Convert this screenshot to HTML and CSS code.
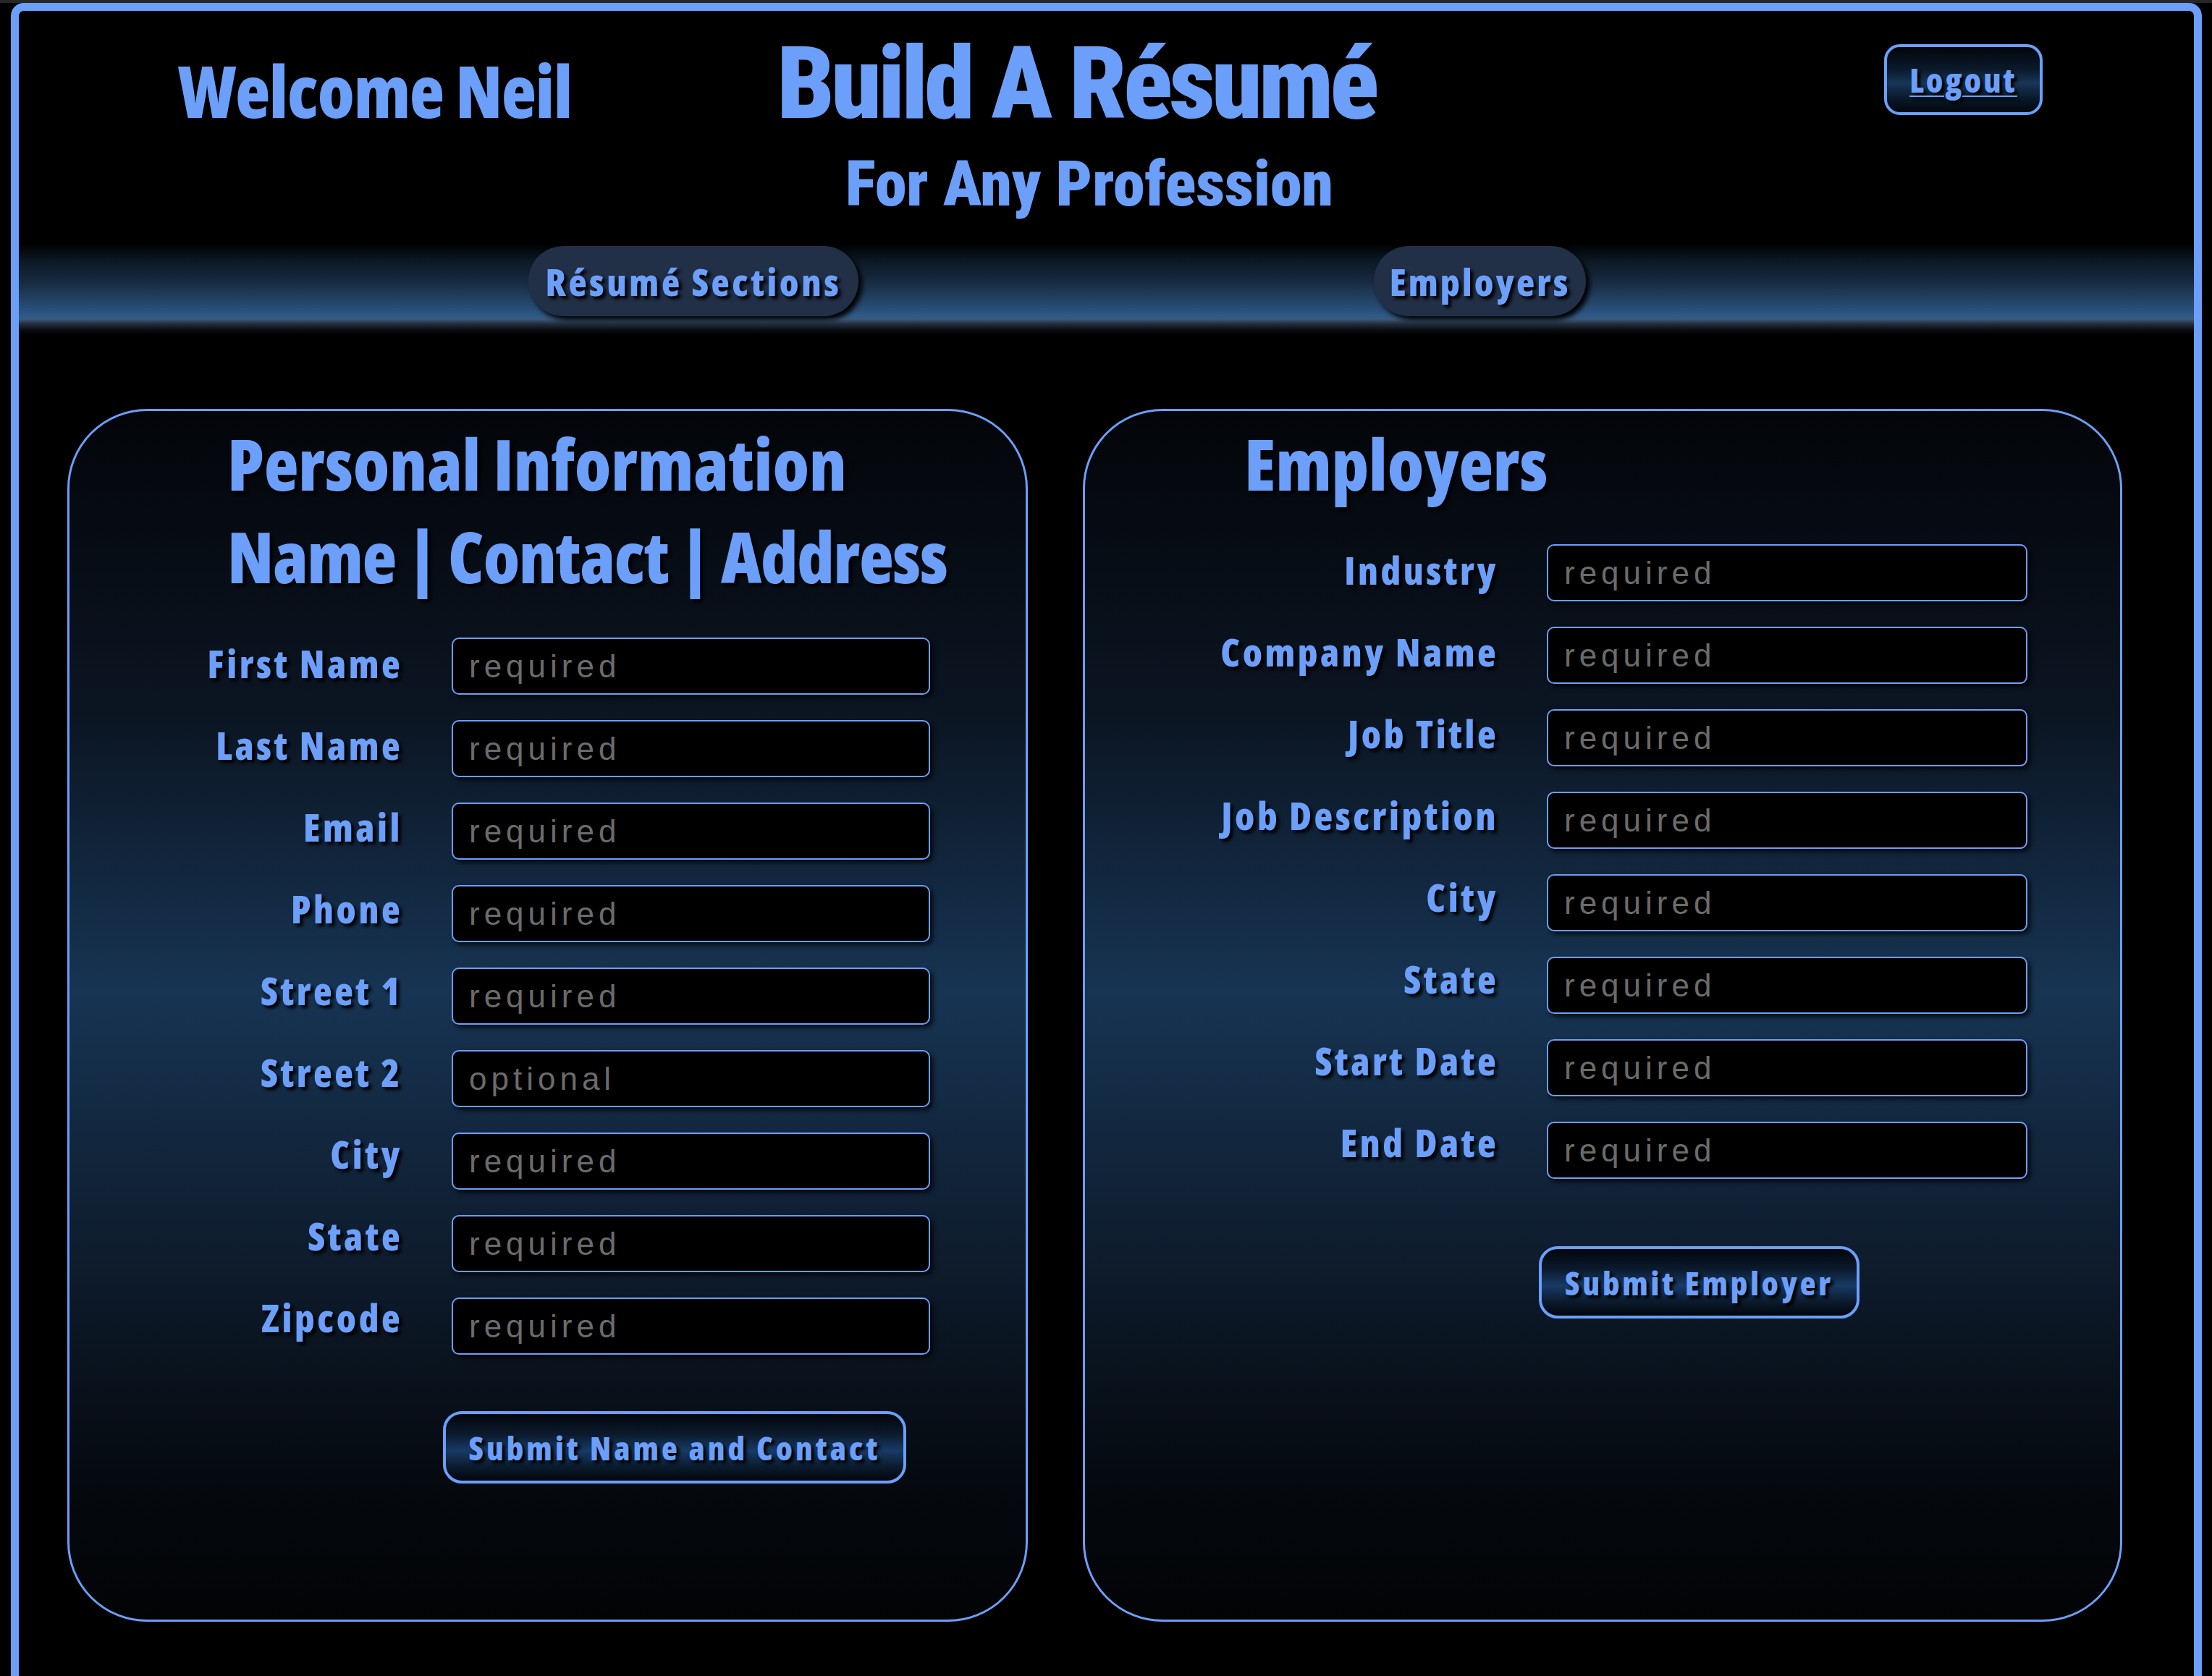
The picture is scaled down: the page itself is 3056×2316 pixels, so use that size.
FILE: index.html
```html
<!DOCTYPE html>
<html lang="en">
<head>
<meta charset="utf-8">
<title>Build A Résumé</title>
<link rel="stylesheet" href="styles.css">
</head>
<body>
<div class="page">
  <header class="header">
    <div class="welcome">Welcome Neil</div>
    <div class="titles">
      <h1 class="title">Build A Résumé</h1>
      <h2 class="subtitle">For Any Profession</h2>
    </div>
    <a class="logout" href="#">Logout</a>
  </header>

  <nav class="nav">
    <a class="pill pill-sections" href="#">Résumé Sections</a>
    <a class="pill pill-employers" href="#">Employers</a>
  </nav>

  <main class="main">
    <section class="panel panel-personal">
      <div class="panel-heading">
        <div class="heading-line">Personal Information</div>
        <div class="heading-line heading-sub">Name | Contact | Address</div>
      </div>
      <form class="form form-personal">
        <div class="labels">
          <label class="label">First Name</label>
          <label class="label">Last Name</label>
          <label class="label">Email</label>
          <label class="label">Phone</label>
          <label class="label">Street 1</label>
          <label class="label">Street 2</label>
          <label class="label">City</label>
          <label class="label">State</label>
          <label class="label">Zipcode</label>
        </div>
        <div class="fields">
          <input class="field" placeholder="required">
          <input class="field" placeholder="required">
          <input class="field" placeholder="required">
          <input class="field" placeholder="required">
          <input class="field" placeholder="required">
          <input class="field" placeholder="optional">
          <input class="field" placeholder="required">
          <input class="field" placeholder="required">
          <input class="field" placeholder="required">
        </div>
      </form>
      <button class="submit submit-personal" type="button">Submit Name and Contact</button>
    </section>

    <section class="panel panel-employers">
      <div class="panel-heading">
        <div class="heading-line">Employers</div>
      </div>
      <form class="form form-employers">
        <div class="labels">
          <label class="label">Industry</label>
          <label class="label">Company Name</label>
          <label class="label">Job Title</label>
          <label class="label">Job Description</label>
          <label class="label">City</label>
          <label class="label">State</label>
          <label class="label">Start Date</label>
          <label class="label">End Date</label>
        </div>
        <div class="fields">
          <input class="field" placeholder="required">
          <input class="field" placeholder="required">
          <input class="field" placeholder="required">
          <input class="field" placeholder="required">
          <input class="field" placeholder="required">
          <input class="field" placeholder="required">
          <input class="field" placeholder="required">
          <input class="field" placeholder="required">
        </div>
      </form>
      <button class="submit submit-employers" type="button">Submit Employer</button>
    </section>
  </main>
</div>
</body>
</html>
```
FILE: styles.css
```css
html { background: #000; }
body {
  margin: 0;
  border-top: 4px solid #262626;
  background: #000;
  color: #6b9ff9;
  font-family: "Open Sans", "Roboto", sans-serif;
  font-stretch: 75%;
  font-weight: 800;
}

.page {
  margin: 0 14px 0 15px;
  border: 11px solid #6b9ff9;
  border-bottom: none;
  border-radius: 18px 18px 0 0;
  padding-bottom: 140px;
}

/* ---------- header ---------- */
.header {
  display: grid;
  grid-template-columns: 971px 1000px 1fr;
  align-items: start;
}
.welcome {
  padding-left: 220px;
  margin-top: 60px;
  font-size: 99px;
  line-height: 1;
  letter-spacing: -1px;
  white-space: nowrap;
}
.titles { text-align: center; }
.title,
.subtitle {
  font-family: "Roboto", "Open Sans", sans-serif;
  font-stretch: 75%;
  font-weight: 900;
  line-height: 1;
  white-space: nowrap;
}
.title {
  margin: 30px 0 0;
  padding-right: 20px;
  font-size: 140px;
  letter-spacing: -4.6px;
}
.subtitle {
  margin: 25px 0 0;
  padding-left: 16px;
  font-size: 88px;
}
.logout {
  justify-self: end;
  margin: 46px 209px 0 0;
  box-sizing: border-box;
  width: 219px;
  height: 98px;
  border: 4px solid #6b9ff9;
  border-radius: 22px;
  background: linear-gradient(#02060c 0%, #0b1a2c 35%, #183556 55%, #0b1a2c 78%, #02060c 100%);
  display: flex;
  align-items: center;
  justify-content: center;
  color: #6b9ff9;
  font-size: 46px;
  letter-spacing: 3px;
  text-decoration: underline;
  text-decoration-thickness: 2px;
  text-underline-offset: 4px;
  text-shadow: 4px 4px 4px #000;
}

/* ---------- nav band ---------- */
.nav {
  margin-top: 33px;
  height: 132px;
  box-sizing: border-box;
  padding: 9px 0 0 704px;
  display: flex;
  align-items: flex-start;
  gap: 712px;
  background: linear-gradient(to bottom,
    #000 0px, #000 6px, #0c1824 29px, #182b42 59px, #284c74 94px,
    #2e5a88 106px, #3d5878 110px, #222c3c 117px, #0a0d12 125px, #000 132px);
}
.pill {
  box-sizing: border-box;
  height: 97px;
  border-radius: 48px;
  background: #212f47;
  box-shadow: 5px 5px 7px #000;
  display: flex;
  align-items: center;
  justify-content: center;
  color: #6b9ff9;
  font-size: 52px;
  text-decoration: none;
  text-shadow: 4px 4px 4px #000;
  white-space: nowrap;
}
.pill-sections { width: 456px; letter-spacing: 3.6px; }
.pill-employers { width: 293px; letter-spacing: 3px; }

/* ---------- panels ---------- */
.main {
  padding: 102px 0 0 67px;
  display: flex;
  gap: 76px;
  align-items: flex-start;
}
.panel {
  box-sizing: border-box;
  height: 1676px;
  border: 3px solid #6b9ff9;
  border-radius: 110px;
  background: linear-gradient(to bottom,
    #030509 0%, #0b1522 25%, #173453 48%, #0e1c2d 70%, #050a10 88%, #020305 100%);
  padding-top: 8px;
}
.panel-personal { width: 1327px; }
.panel-employers { width: 1436px; }

.panel-heading {
  padding-left: 218px;
  font-size: 98px;
  line-height: 128px;
  text-shadow: 4px 4px 4px #000;
  white-space: nowrap;
}
.heading-sub { letter-spacing: -1.1px; }
.panel-employers .panel-heading { padding-left: 220px; }

.form {
  display: flex;
  align-items: flex-start;
  margin-top: 49px;
}
.form-employers { margin-top: 48px; }

.labels {
  display: flex;
  flex-direction: column;
  gap: 60px;
  padding-top: 9px;
}
.form-personal .labels { width: 460px; margin-right: 68px; }
.form-employers .labels { width: 571px; margin-right: 67px; }

.label {
  display: block;
  height: 53px;
  text-align: right;
  font-size: 53px;
  line-height: 53px;
  letter-spacing: 3.5px;
  text-shadow: 4px 4px 4px #000;
  white-space: nowrap;
}

.fields {
  display: flex;
  flex-direction: column;
  gap: 35px;
}
.form-personal .fields { width: 661px; }
.form-employers .fields { width: 664px; }

.field {
  box-sizing: border-box;
  height: 79px;
  width: 100%;
  margin: 0;
  padding: 0 0 0 22px;
  border: 2px solid #6b9ff9;
  border-radius: 10px;
  background: #000;
  box-shadow: 4px 4px 6px rgba(0, 0, 0, 0.75);
  color: #ccc;
  font-family: "Liberation Sans", Arial, sans-serif;
  font-stretch: normal;
  font-weight: 400;
  font-size: 44px;
  letter-spacing: 6px;
  outline: none;
}
.field::placeholder { color: #6b6b6b; opacity: 1; }

.submit {
  display: block;
  box-sizing: border-box;
  height: 100px;
  border: 4px solid #6b9ff9;
  border-radius: 26px;
  background: linear-gradient(#02060c 0%, #0b1a2c 30%, #183a66 55%, #0b1a2c 80%, #02060c 100%);
  color: #6b9ff9;
  font-family: "Open Sans", "Roboto", sans-serif;
  font-stretch: 75%;
  font-weight: 800;
  font-size: 45px;
  text-shadow: 4px 4px 4px #000;
  padding: 0;
  cursor: pointer;
  white-space: nowrap;
}
.submit-personal { width: 640px; margin: 78px 0 0 516px; letter-spacing: 4px; }
.submit-employers { width: 443px; margin: 93px 0 0 627px; letter-spacing: 3.8px; }
```
